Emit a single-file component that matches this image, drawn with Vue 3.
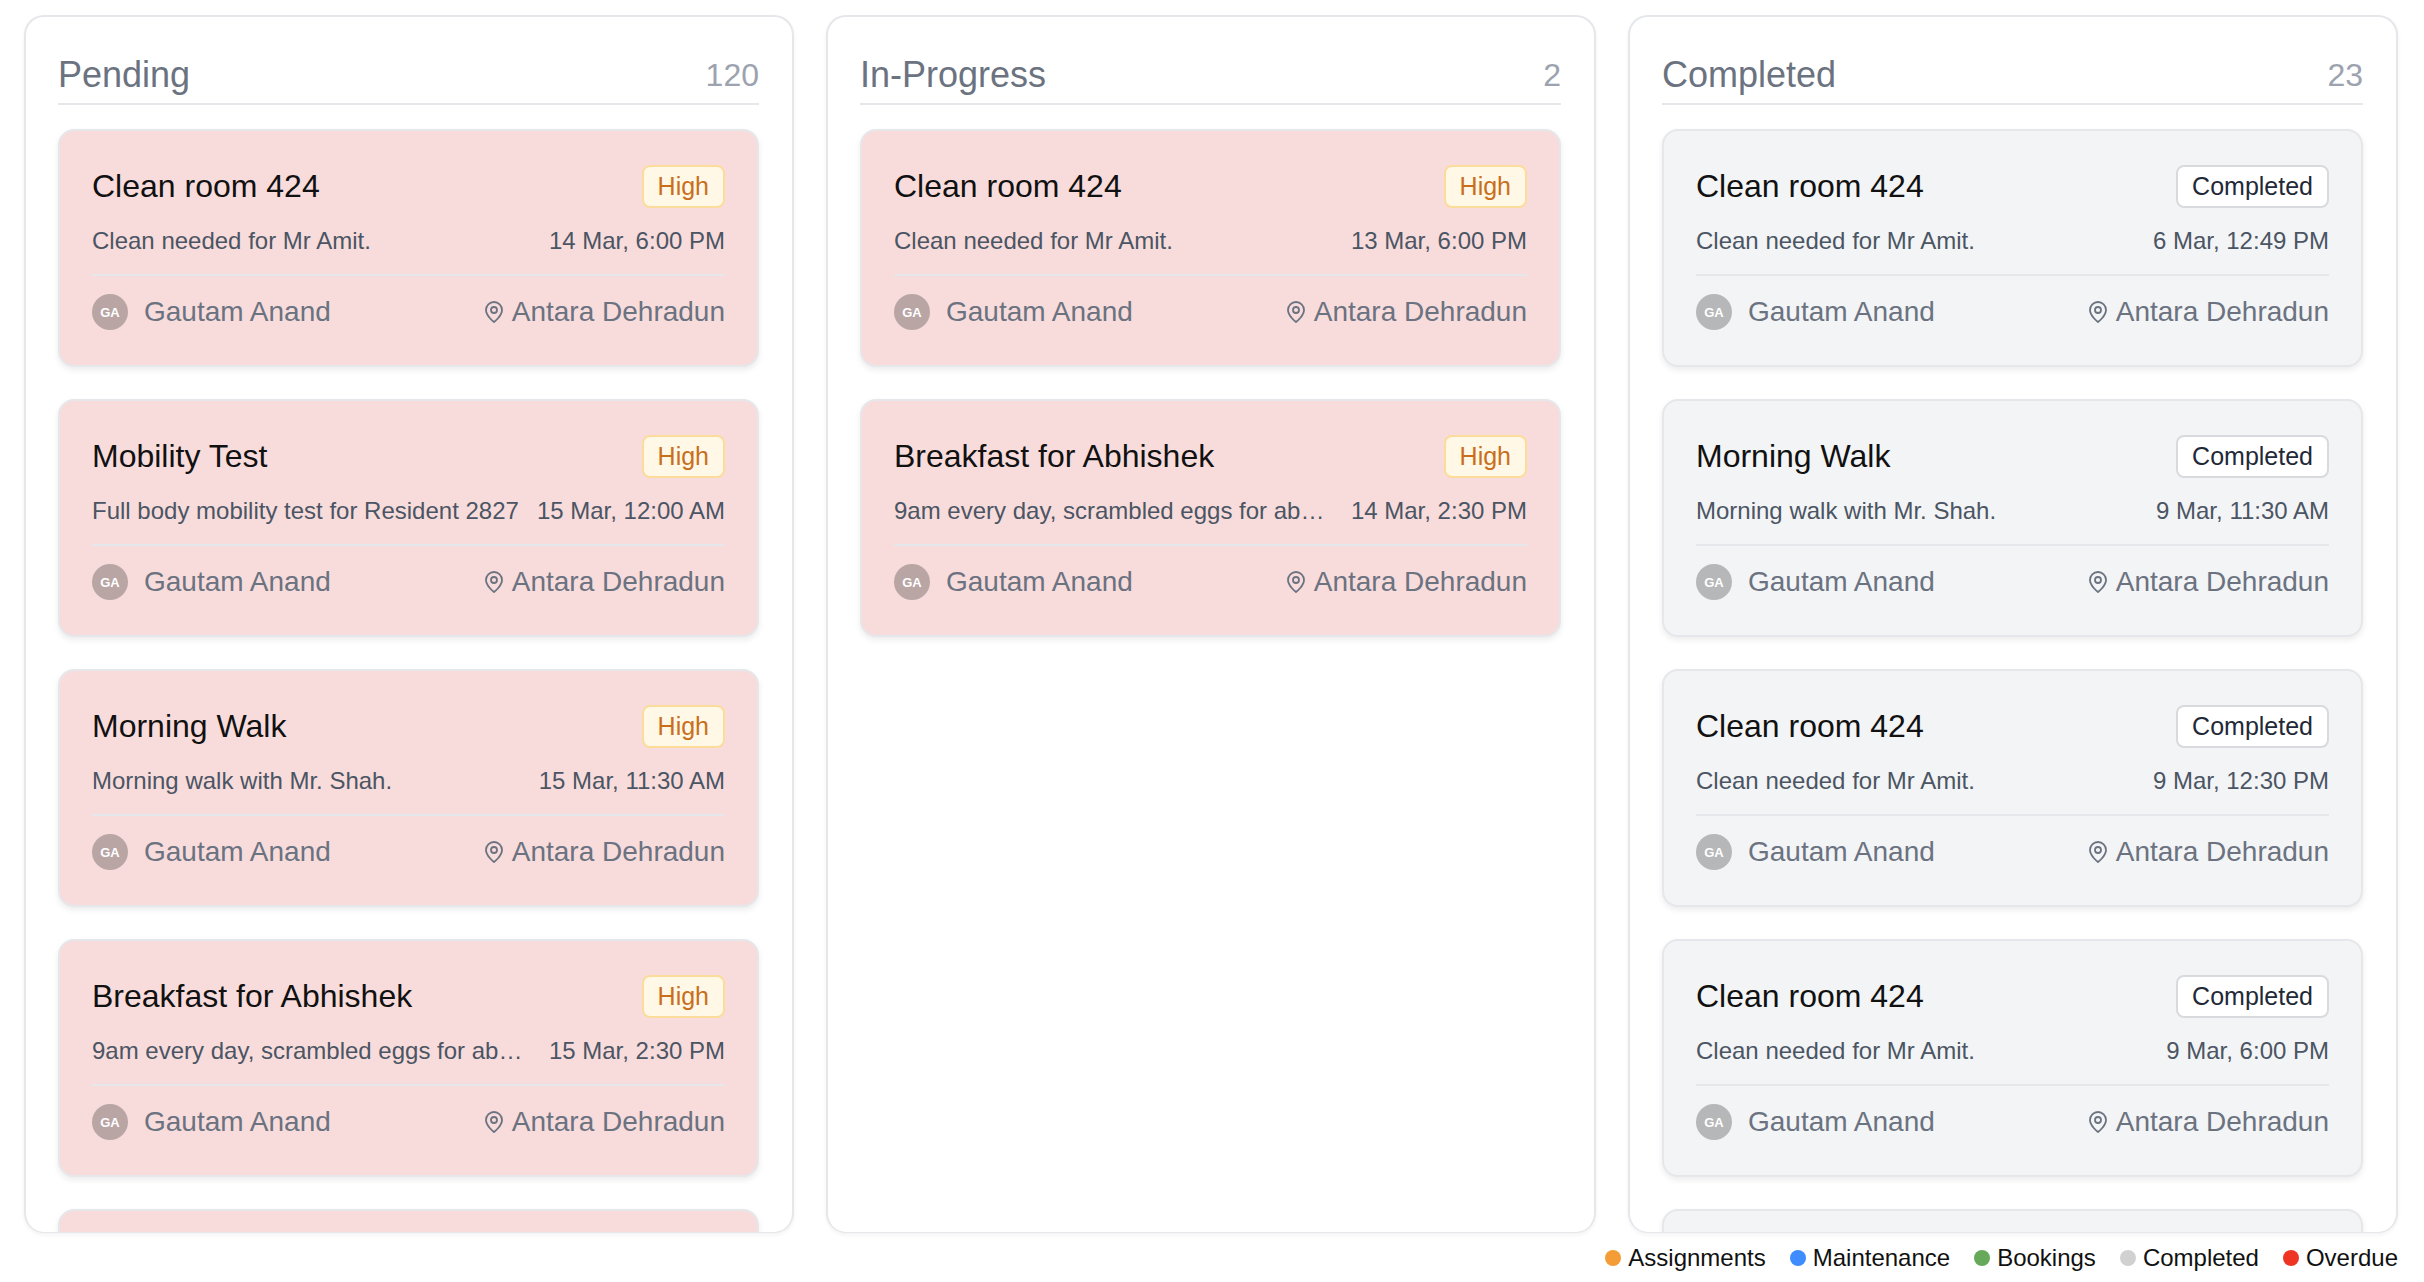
<template>
  <div class="page">
    <div class="board">
      <section v-for="col in columns" :key="col.name" class="column">
        <header class="column-head">
          <h2 class="column-title">{{ col.name }}</h2>
          <span class="column-count">{{ col.count }}</span>
        </header>
        <div class="card-list">
          <article v-for="(task, i) in col.tasks" :key="i" class="card" :class="col.done ? 'card-done' : 'card-overdue'">
            <div class="card-top">
              <h3 class="card-title">{{ task.title }}</h3>
              <span class="badge" :class="col.done ? 'badge-done' : 'badge-high'">{{ col.done ? 'Completed' : 'High' }}</span>
            </div>
            <div class="card-info">
              <span class="card-desc">{{ task.desc }}</span>
              <span class="card-date">{{ task.date }}</span>
            </div>
            <div class="card-foot">
              <div class="person">
                <span class="avatar">GA</span>
                <span>Gautam Anand</span>
              </div>
              <div class="place">
                <svg class="pin" viewBox="0 0 24 24" fill="none" stroke="currentColor" stroke-width="1.8" stroke-linecap="round" stroke-linejoin="round">
                  <path d="M20 10c0 6-8 12-8 12s-8-6-8-12a8 8 0 0 1 16 0Z" />
                  <circle cx="12" cy="10" r="3" />
                </svg>
                <span>Antara Dehradun</span>
              </div>
            </div>
          </article>
        </div>
      </section>
    </div>
    <footer class="legend">
      <span v-for="item in legend" :key="item.label" class="legend-item">
        <i class="dot" :style="{ background: item.color }"></i>{{ item.label }}
      </span>
    </footer>
  </div>
</template>

<script setup>
const clean = 'Clean needed for Mr Amit.'
const eggs = '9am every day, scrambled eggs for abhishek and family'
const walk = 'Morning walk with Mr. Shah.'

const columns = [
  {
    name: 'Pending',
    count: 120,
    tasks: [
      { title: 'Clean room 424', desc: clean, date: '14 Mar, 6:00 PM' },
      { title: 'Mobility Test', desc: 'Full body mobility test for Resident 2827', date: '15 Mar, 12:00 AM' },
      { title: 'Morning Walk', desc: walk, date: '15 Mar, 11:30 AM' },
      { title: 'Breakfast for Abhishek', desc: eggs, date: '15 Mar, 2:30 PM' },
      { title: 'Clean room 424', desc: clean, date: '15 Mar, 6:00 PM' }
    ]
  },
  {
    name: 'In-Progress',
    count: 2,
    tasks: [
      { title: 'Clean room 424', desc: clean, date: '13 Mar, 6:00 PM' },
      { title: 'Breakfast for Abhishek', desc: eggs, date: '14 Mar, 2:30 PM' }
    ]
  },
  {
    name: 'Completed',
    count: 23,
    done: true,
    tasks: [
      { title: 'Clean room 424', desc: clean, date: '6 Mar, 12:49 PM' },
      { title: 'Morning Walk', desc: walk, date: '9 Mar, 11:30 AM' },
      { title: 'Clean room 424', desc: clean, date: '9 Mar, 12:30 PM' },
      { title: 'Clean room 424', desc: clean, date: '9 Mar, 6:00 PM' },
      { title: 'Clean room 424', desc: clean, date: '10 Mar, 6:00 PM' }
    ]
  }
]

const legend = [
  { label: 'Assignments', color: '#f49d37' },
  { label: 'Maintenance', color: '#3f8cff' },
  { label: 'Bookings', color: '#66a95a' },
  { label: 'Completed', color: '#d1d1d1' },
  { label: 'Overdue', color: '#ee3524' }
]
</script>

<style>
html, body { background: #fff; }
</style>

<style scoped>
.page { height: 1282px; overflow: hidden; display: flex; flex-direction: column; padding: 15px 26px 0 24px; box-sizing: border-box; font-family: "Liberation Sans", Arial, sans-serif; }
.board { height: 1218px; display: grid; grid-template-columns: repeat(3, 1fr); gap: 32px; }
.column { min-width: 0; overflow: hidden; background: #fff; border: 2px solid #e5e7eb; border-bottom-width: 1px; border-radius: 20px; padding: 0 33px 0 32px; box-sizing: border-box; box-shadow: 0 2px 4px rgba(0, 0, 0, 0.05); }
.column-head { height: 88px; display: flex; justify-content: space-between; align-items: flex-end; padding-bottom: 6px; box-sizing: border-box; border-bottom: 2px solid #e5e7eb; }
.column-title { margin: 0; font-size: 36px; line-height: 44px; font-weight: 400; color: #6b7280; }
.column-count { font-size: 32px; line-height: 44px; color: #9ca3af; }
.card-list { display: flex; flex-direction: column; gap: 32px; padding-top: 24px; }
.card { height: 238px; flex: none; box-sizing: border-box; padding: 33px 32px 0; border-radius: 16px; border: 2px solid #e5e7eb; box-shadow: 0 3px 6px rgba(0, 0, 0, 0.08); }
.card-overdue { background: #f8dcdc; }
.card-done { background: #f3f4f6; }
.card-top { display: flex; justify-content: space-between; align-items: center; height: 44px; }
.card-title { margin: 0; font-size: 32px; line-height: 44px; font-weight: 400; color: #111; }
.badge { height: 43px; box-sizing: border-box; padding: 0 14px; border-radius: 8px; border: 2px solid; font-size: 25px; line-height: 39px; }
.badge-high { background: #fff8e7; border-color: #fcdc9a; color: #c96f1c; }
.badge-done { background: #fff; border-color: #d8dade; color: #1f2937; }
.card-info { display: flex; justify-content: space-between; gap: 16px; margin-top: 16px; font-size: 24px; line-height: 34px; color: #4b5563; padding-bottom: 16px; border-bottom: 2px solid #e5e7eb; }
.card-desc { flex: 1; min-width: 0; overflow: hidden; white-space: nowrap; text-overflow: ellipsis; }
.card-date { flex: none; }
.card-foot { display: flex; justify-content: space-between; align-items: center; margin-top: 18px; height: 36px; font-size: 28px; color: #6b7280; }
.person, .place { display: flex; align-items: center; }
.avatar { width: 36px; height: 36px; border-radius: 50%; background: rgba(0, 0, 0, 0.25); color: #fff; font-size: 13px; font-weight: 700; display: flex; align-items: center; justify-content: center; margin-right: 16px; }
.pin { width: 24px; height: 24px; margin-right: 6px; }
.legend { flex: 1; display: flex; justify-content: flex-end; align-items: center; gap: 24px; font-size: 24px; color: #111; }
.legend-item { display: flex; align-items: center; }
.dot { width: 16px; height: 16px; border-radius: 50%; margin-right: 7px; }
</style>
